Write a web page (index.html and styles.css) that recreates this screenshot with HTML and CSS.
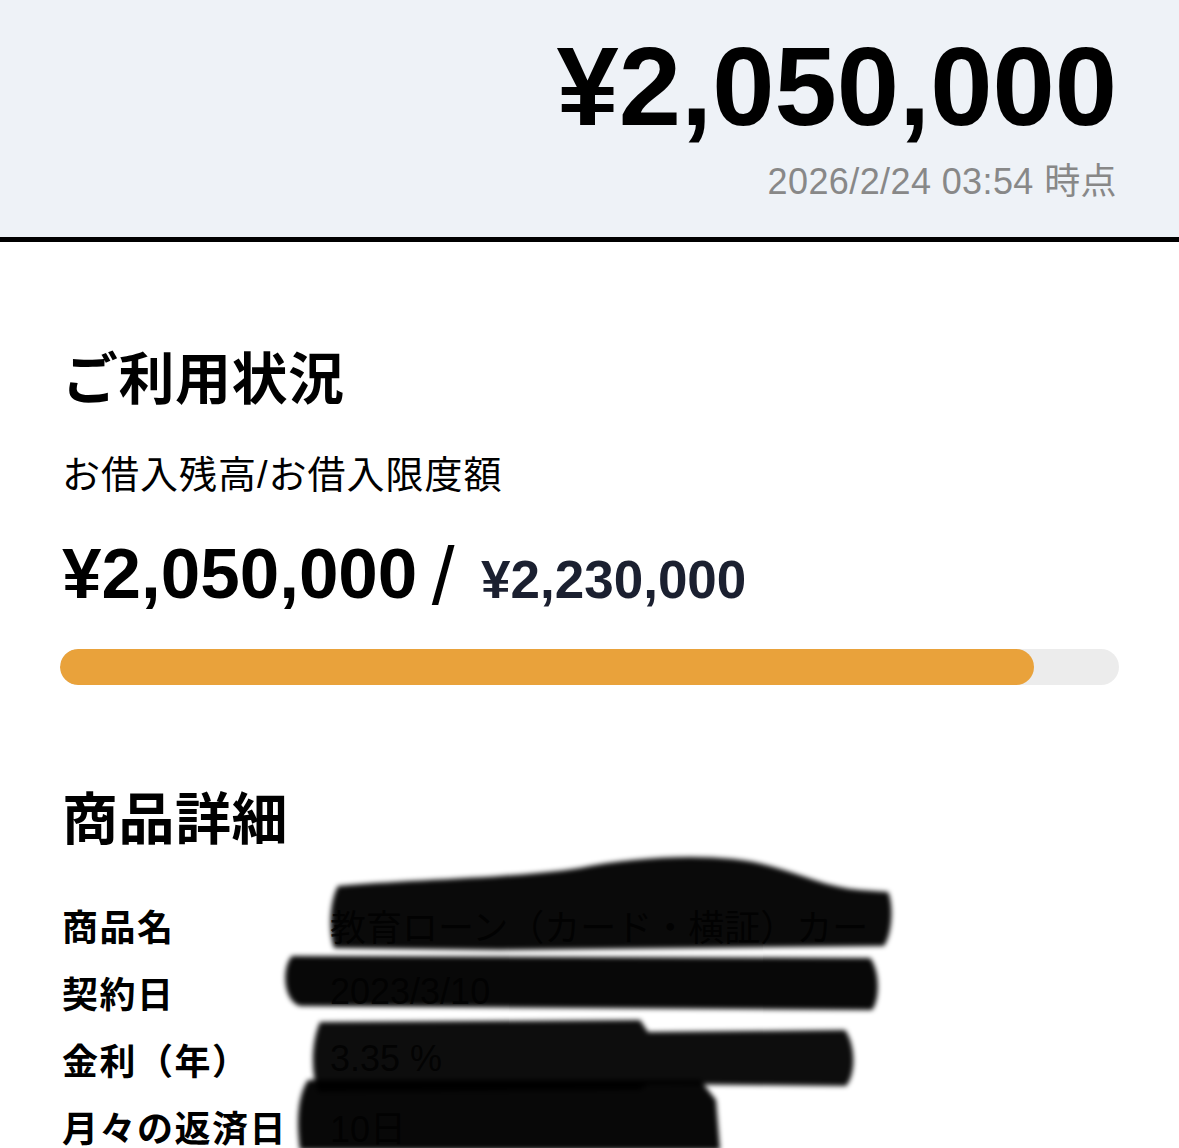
FILE: index.html
```html
<!DOCTYPE html>
<html lang="ja">
<head>
  <meta charset="UTF-8" />
  <meta name="viewport" content="width=device-width, initial-scale=1.0"/>
  <title>ご利用状況</title>
  <link rel="stylesheet" href="styles.css">
</head>
<body>

  <!-- 残高ヘッダー -->
  <header class="summary">
    <div class="summary-amount">¥2,050,000</div>
    <div class="summary-date">2026/2/24 03:54 時点</div>
  </header>

  <main class="content">
    <!-- ご利用状況 -->
    <section class="usage">
      <h2 class="section-title">ご利用状況</h2>
      <p class="usage-label">お借入残高/お借入限度額</p>
      <div class="usage-amount">
        <span class="balance">¥2,050,000</span>
        <span class="slash">/</span>
        <span class="limit">¥2,230,000</span>
      </div>
      <div class="progress">
        <div class="progress-fill" style="width: 92%"></div>
      </div>
    </section>

    <!-- 商品詳細 -->
    <section class="details">
      <h2 class="section-title">商品詳細</h2>
      <dl class="detail-list">
        <div class="detail-row"><dt>商品名</dt><dd>教育ローン（カード・横証）カー</dd></div>
        <div class="detail-row"><dt>契約日</dt><dd>2023/3/10</dd></div>
        <div class="detail-row"><dt>金利（年）</dt><dd>3.35 %</dd></div>
        <div class="detail-row"><dt>月々の返済日</dt><dd>10日</dd></div>
      </dl>
    </section>
  </main>

  <!-- 塗りつぶし -->
  <svg class="redact" viewBox="0 0 1179 1148" width="1179" height="1148">
    <defs>
      <filter id="soft" x="-5%" y="-20%" width="110%" height="140%">
        <feGaussianBlur stdDeviation="2.5"/>
      </filter>
    </defs>
    <g filter="url(#soft)" fill="#000">
      <path d="M338,886 C400,880 520,878 580,868 C640,856 720,852 770,866 C800,874 830,888 860,890 L888,892 C894,905 892,935 884,946 L500,950 L334,948 C328,930 330,900 338,886 Z" fill-opacity="0.96"/>
      <path d="M292,956 L870,958 C880,970 880,1000 872,1010 L300,1006 C282,1000 282,966 292,956 Z" fill-opacity="0.97"/>
      <path d="M320,1022 L640,1020 L648,1032 L845,1030 C856,1045 856,1075 846,1086 L648,1084 L640,1090 L318,1092 C310,1070 312,1040 320,1022 Z" fill-opacity="0.95"/>
      <path d="M308,1080 L700,1080 L716,1100 L720,1150 L300,1150 C296,1120 298,1095 308,1080 Z" fill-opacity="0.97"/>
    </g>
  </svg>

</body>
</html>
```

FILE: styles.css
```css
body {
  margin: 0;
  padding: 0;
  font-family: 'Liberation Sans', 'Noto Sans CJK JP', sans-serif;
  background: #fff;
  color: #000;
  position: relative;
  overflow: hidden;
}

/* ヘッダー */
.summary {
  background-color: #eef2f7;
  border-bottom: 5px solid #000;
  height: 237px;
  box-sizing: content-box;
  padding: 0 62px 0 0;
  text-align: right;
}

.summary-amount {
  padding-top: 31px;
  font-size: 112px;
  line-height: 111px;
  font-weight: bold;
}

.summary-date {
  margin-top: 19px;
  font-size: 36px;
  line-height: 42px;
  color: #888;
  letter-spacing: 0.4px;
}

/* 本文 */
.content {
  padding: 0 60px 0 62px;
}

.section-title {
  margin: 0;
  font-family: 'Noto Sans CJK JP', sans-serif;
  font-size: 56px;
  line-height: 67px;
  font-weight: 700;
  letter-spacing: 0.5px;
}

.usage {
  padding-top: 99px;
}

.usage-label {
  margin: 41px 0 0;
  font-family: 'Liberation Sans', 'Noto Sans CJK JP', sans-serif;
  font-size: 38px;
  line-height: 53px;
  letter-spacing: 1px;
}

.usage-amount {
  margin-top: 25px;
  height: 85px;
  line-height: 85px;
  white-space: nowrap;
}

.balance {
  font-size: 71px;
  font-weight: bold;
}

.slash {
  display: inline-block;
  font-size: 82px;
  font-weight: 300;
  transform: translateY(6px);
  margin: 0 22px 0 10px;
}

.limit {
  font-size: 53px;
  font-weight: bold;
  color: #1b2030;
}

.progress {
  margin-top: 37px;
  margin-left: -2px;
  height: 36px;
  border-radius: 18px;
  background-color: #ececec;
  overflow: hidden;
}

.progress-fill {
  height: 100%;
  border-radius: 18px;
  background-color: #e9a23b;
}

/* 商品詳細 */
.details {
  padding-top: 96px;
}

.detail-list {
  margin: 43px 0 0;
}

.detail-row {
  display: flex;
  height: 67px;
  align-items: center;
}

.detail-row dt {
  width: 268px;
  flex-shrink: 0;
  font-family: 'Noto Sans CJK JP', sans-serif;
  font-size: 36px;
  font-weight: 700;
  letter-spacing: 1.5px;
}

.detail-row dd {
  margin: 0;
  font-size: 36px;
  color: #333;
  white-space: nowrap;
}

.redact {
  position: absolute;
  top: 0;
  left: 0;
  pointer-events: none;
}
```
